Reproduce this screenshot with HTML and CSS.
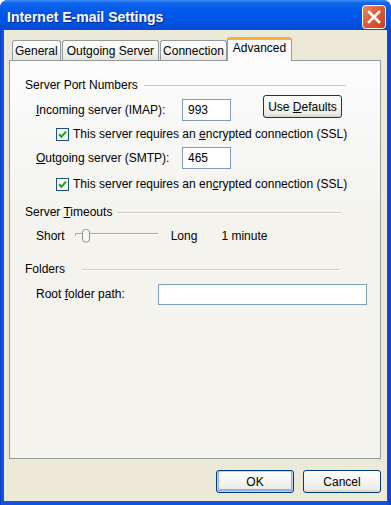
FILE: index.html
```html
<!DOCTYPE html>
<html lang="en">
<head>
  <meta charset="UTF-8">
  <title>Internet E-mail Settings</title>
  <link rel="stylesheet" href="styles.css">
</head>
<body>
  <div class="window">
    <div class="titlebar">
      <span class="title">Internet E-mail Settings</span>
      <button class="close" aria-label="Close">
        <svg width="24" height="24" viewBox="0 0 24 24">
          <defs>
            <linearGradient id="closeFill" x1="0" y1="0" x2="1" y2="1">
              <stop offset="0" stop-color="#F08A66"/>
              <stop offset="0.5" stop-color="#DC5A36"/>
              <stop offset="1" stop-color="#C2401E"/>
            </linearGradient>
          </defs>
          <rect x="0.5" y="0.5" width="23" height="23" rx="3" fill="url(#closeFill)" stroke="#FFFFFF"/>
          <path d="M7 7 L17 17 M17 7 L7 17" stroke="#FFFFFF" stroke-width="2.6" stroke-linecap="square"/>
        </svg>
      </button>
    </div>

    <div class="client">
      <div class="tabs">
        <div class="tab">General</div>
        <div class="tab tab-wide">Outgoing Server</div>
        <div class="tab">Connection</div>
        <div class="tab active">Advanced</div>
      </div>

      <div class="panel">
        <div class="group-head"><span>Server Port Numbers</span></div>

        <div class="row row-port">
          <span class="field-label"><u>I</u>ncoming server (IMAP):</span>
          <input class="text-input port" value="993">
          <button class="btn btn-defaults">Use <u>D</u>efaults</button>
        </div>
        <div class="check-row">
          <svg class="check" width="13" height="13" viewBox="0 0 13 13">
            <rect x="0.5" y="0.5" width="12" height="12" fill="#F4F4F0" stroke="#1C5180"/>
            <path d="M3 6.2 L5.4 8.8 L10 3.6" fill="none" stroke="#21A121" stroke-width="2"/>
          </svg>
          <span>This server requires an <u>e</u>ncrypted connection (SSL)</span>
        </div>

        <div class="row row-port row-second">
          <span class="field-label"><u>O</u>utgoing server (SMTP):</span>
          <input class="text-input port" value="465">
        </div>
        <div class="check-row check-second">
          <svg class="check" width="13" height="13" viewBox="0 0 13 13">
            <rect x="0.5" y="0.5" width="12" height="12" fill="#F4F4F0" stroke="#1C5180"/>
            <path d="M3 6.2 L5.4 8.8 L10 3.6" fill="none" stroke="#21A121" stroke-width="2"/>
          </svg>
          <span>This server requires an en<u>c</u>rypted connection (SSL)</span>
        </div>

        <div class="group-head group-timeouts"><span>Server <u>T</u>imeouts</span></div>
        <div class="row slider-row">
          <span>Short</span>
          <svg class="slider" width="90" height="14" viewBox="0 0 90 14">
            <path d="M3.5 7 V4.5 H86" fill="none" stroke="#A9A89E"/>
            <path d="M4 5.5 H86" stroke="#FFFFFF"/>
            <rect x="10.5" y="0.5" width="7" height="12.5" rx="3" fill="#F7F7F4" stroke="#8C9092"/>
          </svg>
          <span class="long">Long</span>
          <span class="duration">1 minute</span>
        </div>

        <div class="group-head group-folders"><span>Folders</span></div>
        <div class="row row-folder">
          <span class="field-label folder-label">Root <u>f</u>older path:</span>
          <input class="text-input folder" value="">
        </div>
      </div>

      <div class="actions">
        <button class="btn btn-ok">OK</button>
        <button class="btn">Cancel</button>
      </div>
    </div>
  </div>
</body>
</html>
```

FILE: styles.css
```css
html, body {
    margin: 0;
    padding: 0;
    background: #ffffff;
}
body {
    font-family: "Liberation Sans", Arial, sans-serif;
    font-size: 12px;
    color: #000000;
}
u {
    text-decoration-thickness: 1px;
    text-underline-offset: 1px;
}
.window {
    width: 391px;
    height: 505px;
    box-sizing: border-box;
    display: flex;
    flex-direction: column;
    padding: 0 4px 4px;
    background: linear-gradient(to right, #0A3CC8, #1453DC 2px, #1453DC 387px, #0A3CC8);
    border-radius: 8px 8px 0 0;
}
.titlebar {
    height: 30px;
    box-sizing: border-box;
    margin: 0 -4px;
    padding: 3px 5px 0 7px;
    display: flex;
    align-items: center;
    justify-content: space-between;
    border-radius: 8px 8px 0 0;
    background: linear-gradient(to bottom, #3D8DF5 0%, #0F64EC 10%, #0058EA 40%, #0054E3 75%, #0848CF 100%);
}
.title {
    color: #ffffff;
    font-weight: bold;
    font-size: 14px;
    text-shadow: 1px 1px 0 #0A2A8A;
}
.close {
    width: 24px;
    height: 24px;
    padding: 0;
    border: 0;
    background: none;
    display: block;
}
.close svg {
    display: block;
}

.client {
    flex: 1;
    display: flex;
    flex-direction: column;
    background: #ECE9D8;
    padding: 8px 6px 8px 5px;
}
.tabs {
    height: 22px;
    display: flex;
    align-items: flex-end;
    gap: 1px;
    padding-left: 3px;
}
.tab {
    height: 20px;
    box-sizing: border-box;
    padding: 0 2px;
    display: flex;
    align-items: center;
    border: 1px solid #919B9C;
    border-bottom: none;
    border-radius: 3px 3px 0 0;
    background: linear-gradient(#FFFFFF, #F6F6F3 50%, #E6E5DE);
}
.tab-wide {
    padding: 0 4px;
}
.tab.active {
    height: 24px;
    margin: 0 0 -1px -1px;
    padding: 1px 5px 0;
    align-items: flex-start;
    border-top: 3px solid #F4B23B;
    background: #FCFCFE;
    position: relative;
    z-index: 1;
}
.panel {
    flex: 1;
    border: 1px solid #919B9C;
    background: linear-gradient(#FCFCFE, #F4F3EE 40%);
    padding-top: 17px;
}
.group-head {
    display: flex;
    align-items: center;
    gap: 6px;
    height: 14px;
    margin: 0 34px 0 15px;
}
.group-head::after {
    content: "";
    flex: 1;
    height: 1px;
    background: #CBCBC2;
    box-shadow: 0 1px 0 #ffffff;
}
.group-timeouts {
    margin-top: 14px;
    margin-right: 39px;
    gap: 5px;
}
.group-folders {
    margin-top: 19px;
    margin-right: 41px;
    gap: 17px;
}
.row {
    display: flex;
    align-items: flex-start;
    margin-left: 26px;
}
.field-label {
    width: 146px;
    line-height: 22px;
}
.row-port {
    margin-top: 7px;
}
.row-second {
    margin-top: 6px;
}
.text-input {
    box-sizing: border-box;
    height: 22px;
    border: 1px solid #7F9DB9;
    background: #ffffff;
    font: 12px "Liberation Sans", Arial, sans-serif;
    padding: 0 5px;
    margin: 0;
    outline: none;
}
.port {
    width: 49px;
}
.check-row {
    display: flex;
    align-items: center;
    gap: 4px;
    height: 14px;
    margin: 6px 0 0 46px;
}
.check-second {
    margin-top: 8px;
}
.check {
    display: block;
}
.slider-row {
    margin-top: 10px;
    height: 14px;
    align-items: center;
}
.slider {
    display: block;
    margin-left: 7px;
}
.long {
    margin-left: 9px;
}
.duration {
    margin-left: 24px;
}
.row-folder {
    margin-top: 8px;
}
.folder-label {
    width: 122px;
    line-height: 21px;
}
.folder {
    width: 209px;
    height: 21px;
}

.btn {
    box-sizing: border-box;
    height: 23px;
    padding: 0;
    border: 1px solid #003C74;
    border-radius: 3px;
    background: linear-gradient(#FFFFFF, #F6F6F2 45%, #ECEBE5 85%, #D8D3C8);
    font: 12px "Liberation Sans", Arial, sans-serif;
    color: #000000;
}
.btn-defaults {
    width: 79px;
    margin: -4px 0 0 32px;
}
.actions {
    display: flex;
    justify-content: flex-end;
    gap: 9px;
    margin-top: 11px;
}
.actions .btn {
    width: 78px;
}
.btn-ok {
    box-shadow: inset 0 0 0 1px #BCD0F6, inset 0 -1px 0 2px #93B0EA;
}
```
